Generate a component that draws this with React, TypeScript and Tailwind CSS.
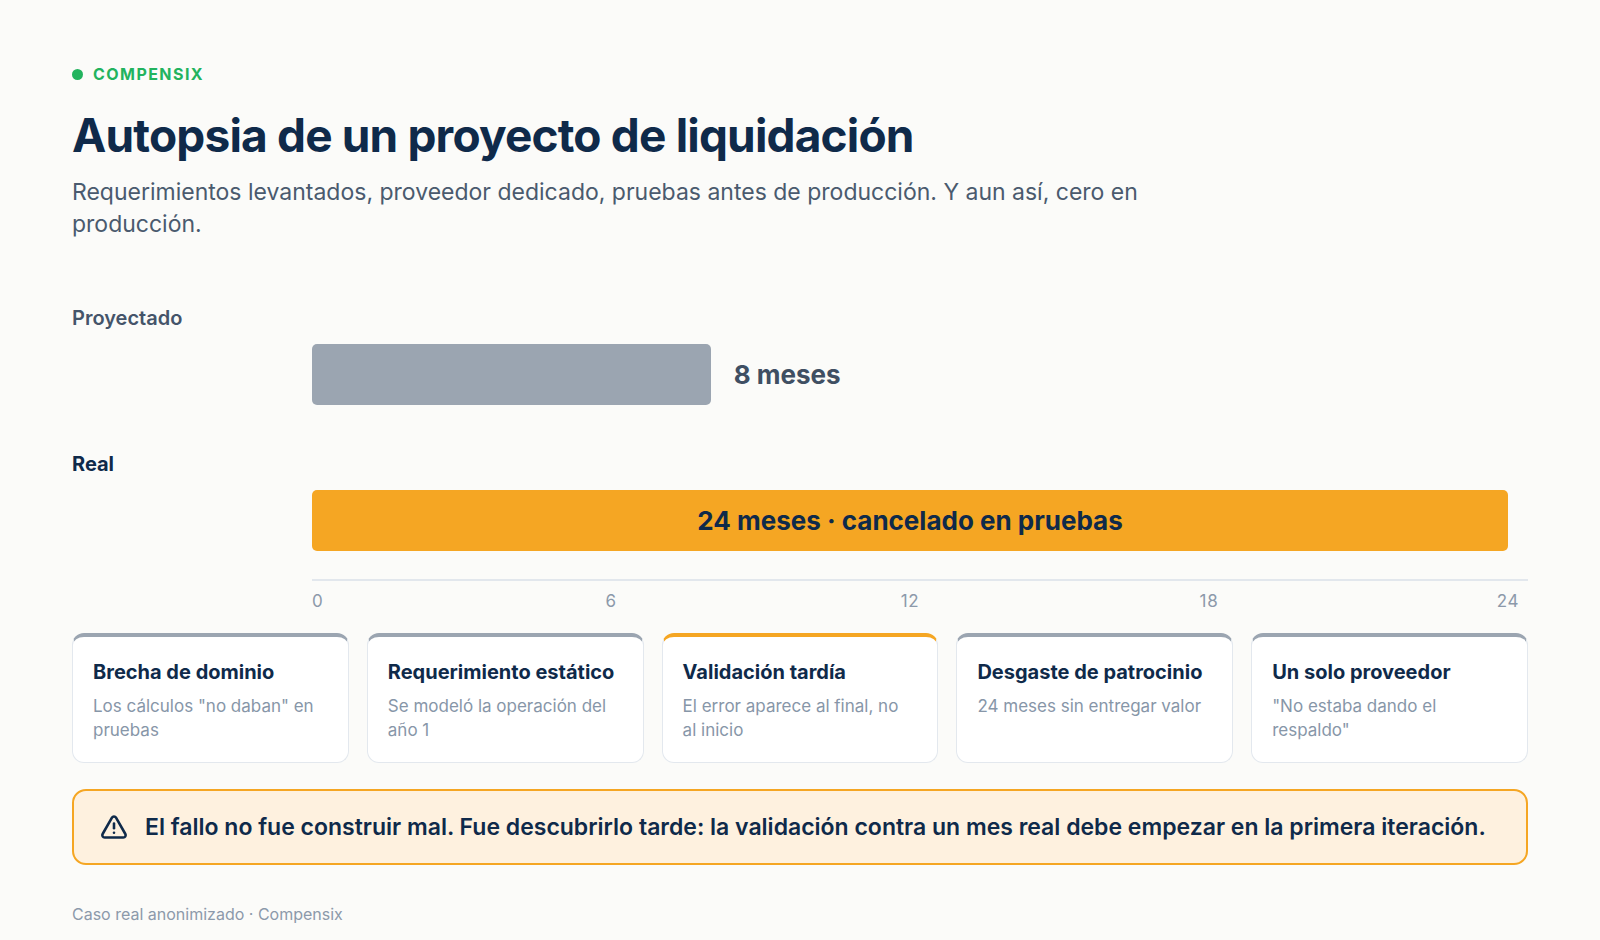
import React from "react";

const cards = [
  { title: "Brecha de dominio", desc: 'Los cálculos "no daban" en pruebas', accent: false },
  { title: "Requerimiento estático", desc: "Se modeló la operación del año 1", accent: false },
  { title: "Validación tardía", desc: "El error aparece al final, no al inicio", accent: true },
  { title: "Desgaste de patrocinio", desc: "24 meses sin entregar valor", accent: false },
  { title: "Un solo proveedor", desc: '"No estaba dando el respaldo"', accent: false },
];

const ticks = [0, 6, 12, 18, 24];

export default function App() {
  return (
    <div className="min-h-[940px] w-full bg-[#fbfbf9] font-['Inter',sans-serif] text-[#0f2a4a]">
      <div className="px-[72px] pt-[62px] pb-[16px]">
        {/* brand */}
        <div className="flex items-center gap-[10px] h-[24px]">
          <span className="block w-[11px] h-[11px] rounded-full bg-[#22b35e]" />
          <span className="text-[16px] font-bold tracking-[0.09em] text-[#22b35e] leading-[24px]">COMPENSIX</span>
        </div>

        <h1 className="mt-[24px] text-[46px] font-bold leading-[50px] tracking-[-0.018em] text-[#0f2a4a]">
          Autopsia de un proyecto de liquidación
        </h1>
        <p className="mt-[16px] max-w-[1120px] text-[23px] leading-[32px] text-[#4a5a6e]">
          Requerimientos levantados, proveedor dedicado, pruebas antes de producción. Y aun así, cero en producción.
        </p>

        {/* chart */}
        <div className="mt-[65px]">
          <div className="text-[20px] font-semibold leading-[27px] text-[#44546a]">Proyectado</div>
          <div className="ml-[240px] mr-[20px] mt-[12px] flex items-center">
            <div className="h-[61px] w-[33.333%] rounded-[5px] bg-[#9ba5b1]" />
            <span className="ml-[23px] text-[26px] font-bold text-[#3f4f63]">8 meses</span>
          </div>

          <div className="mt-[46px] text-[20px] font-bold leading-[27px] text-[#0f2a4a]">Real</div>
          <div className="ml-[240px] mr-[20px] mt-[12px] flex h-[61px] items-center justify-center rounded-[5px] bg-[#f5a623]">
            <span className="text-[26px] font-bold text-[#0f2a4a]">24 meses · cancelado en pruebas</span>
          </div>

          <div className="ml-[240px] mt-[28px]">
            <div className="h-[2px] w-full bg-[#e2e7ed]" />
            <div className="relative mr-[20px] mt-[8px] h-[24px]">
              {ticks.map((t, i) => (
                <span
                  key={t}
                  className={
                    i === 0
                      ? "absolute left-0 top-0 text-[17px] leading-[24px] tracking-[0.04em] text-[#8c99aa]"
                      : "absolute top-0 -translate-x-1/2 text-[17px] leading-[24px] tracking-[0.04em] text-[#8c99aa]"
                  }
                  style={{ left: `${(t / 24) * 100}%` }}
                >
                  {t}
                </span>
              ))}
            </div>
          </div>
        </div>

        {/* cards */}
        <div className="mt-[20px] grid grid-cols-5 gap-[18px]">
          {cards.map((c) => (
            <div
              key={c.title}
              className={
                c.accent
                  ? "rounded-[12px] border border-[#e3e8ee] border-t-4 border-t-[#f5a623] bg-white pl-[20px] pr-[24px] pt-[21px] pb-[20px]"
                  : "rounded-[12px] border border-[#e3e8ee] border-t-4 border-t-[#9ba5b1] bg-white pl-[20px] pr-[24px] pt-[21px] pb-[20px]"
              }
            >
              <div className="text-[20px] font-bold leading-[28px] text-[#0f2a4a]">{c.title}</div>
              <div className="mt-[8px] text-[17px] leading-[24px] text-[#8796a8]">{c.desc}</div>
            </div>
          ))}
        </div>

        {/* banner */}
        <div className="mt-[26px] flex items-center gap-[17px] rounded-[14px] border-2 border-[#f5a623] bg-[#fef1df] pl-[26px] pr-[24px] py-[20px]">
          <svg width="28" height="28" viewBox="0 0 24 24" fill="none" stroke="#0f2a4a" strokeWidth="2.2" strokeLinecap="round" strokeLinejoin="round" className="shrink-0">
            <path d="m21.73 18-8-14a2 2 0 0 0-3.48 0l-8 14A2 2 0 0 0 4 21h16a2 2 0 0 0 1.73-3" />
            <path d="M12 9v4" />
            <path d="M12 17h.01" />
          </svg>
          <span className="text-[23px] font-semibold leading-[32px] text-[#0f2a4a]">
            El fallo no fue construir mal. Fue descubrirlo tarde: la validación contra un mes real debe empezar en la primera iteración.
          </span>
        </div>

        <div className="mt-[38px] text-[16px] leading-[22px] text-[#8c99aa]">Caso real anonimizado · Compensix</div>
      </div>
    </div>
  );
}
